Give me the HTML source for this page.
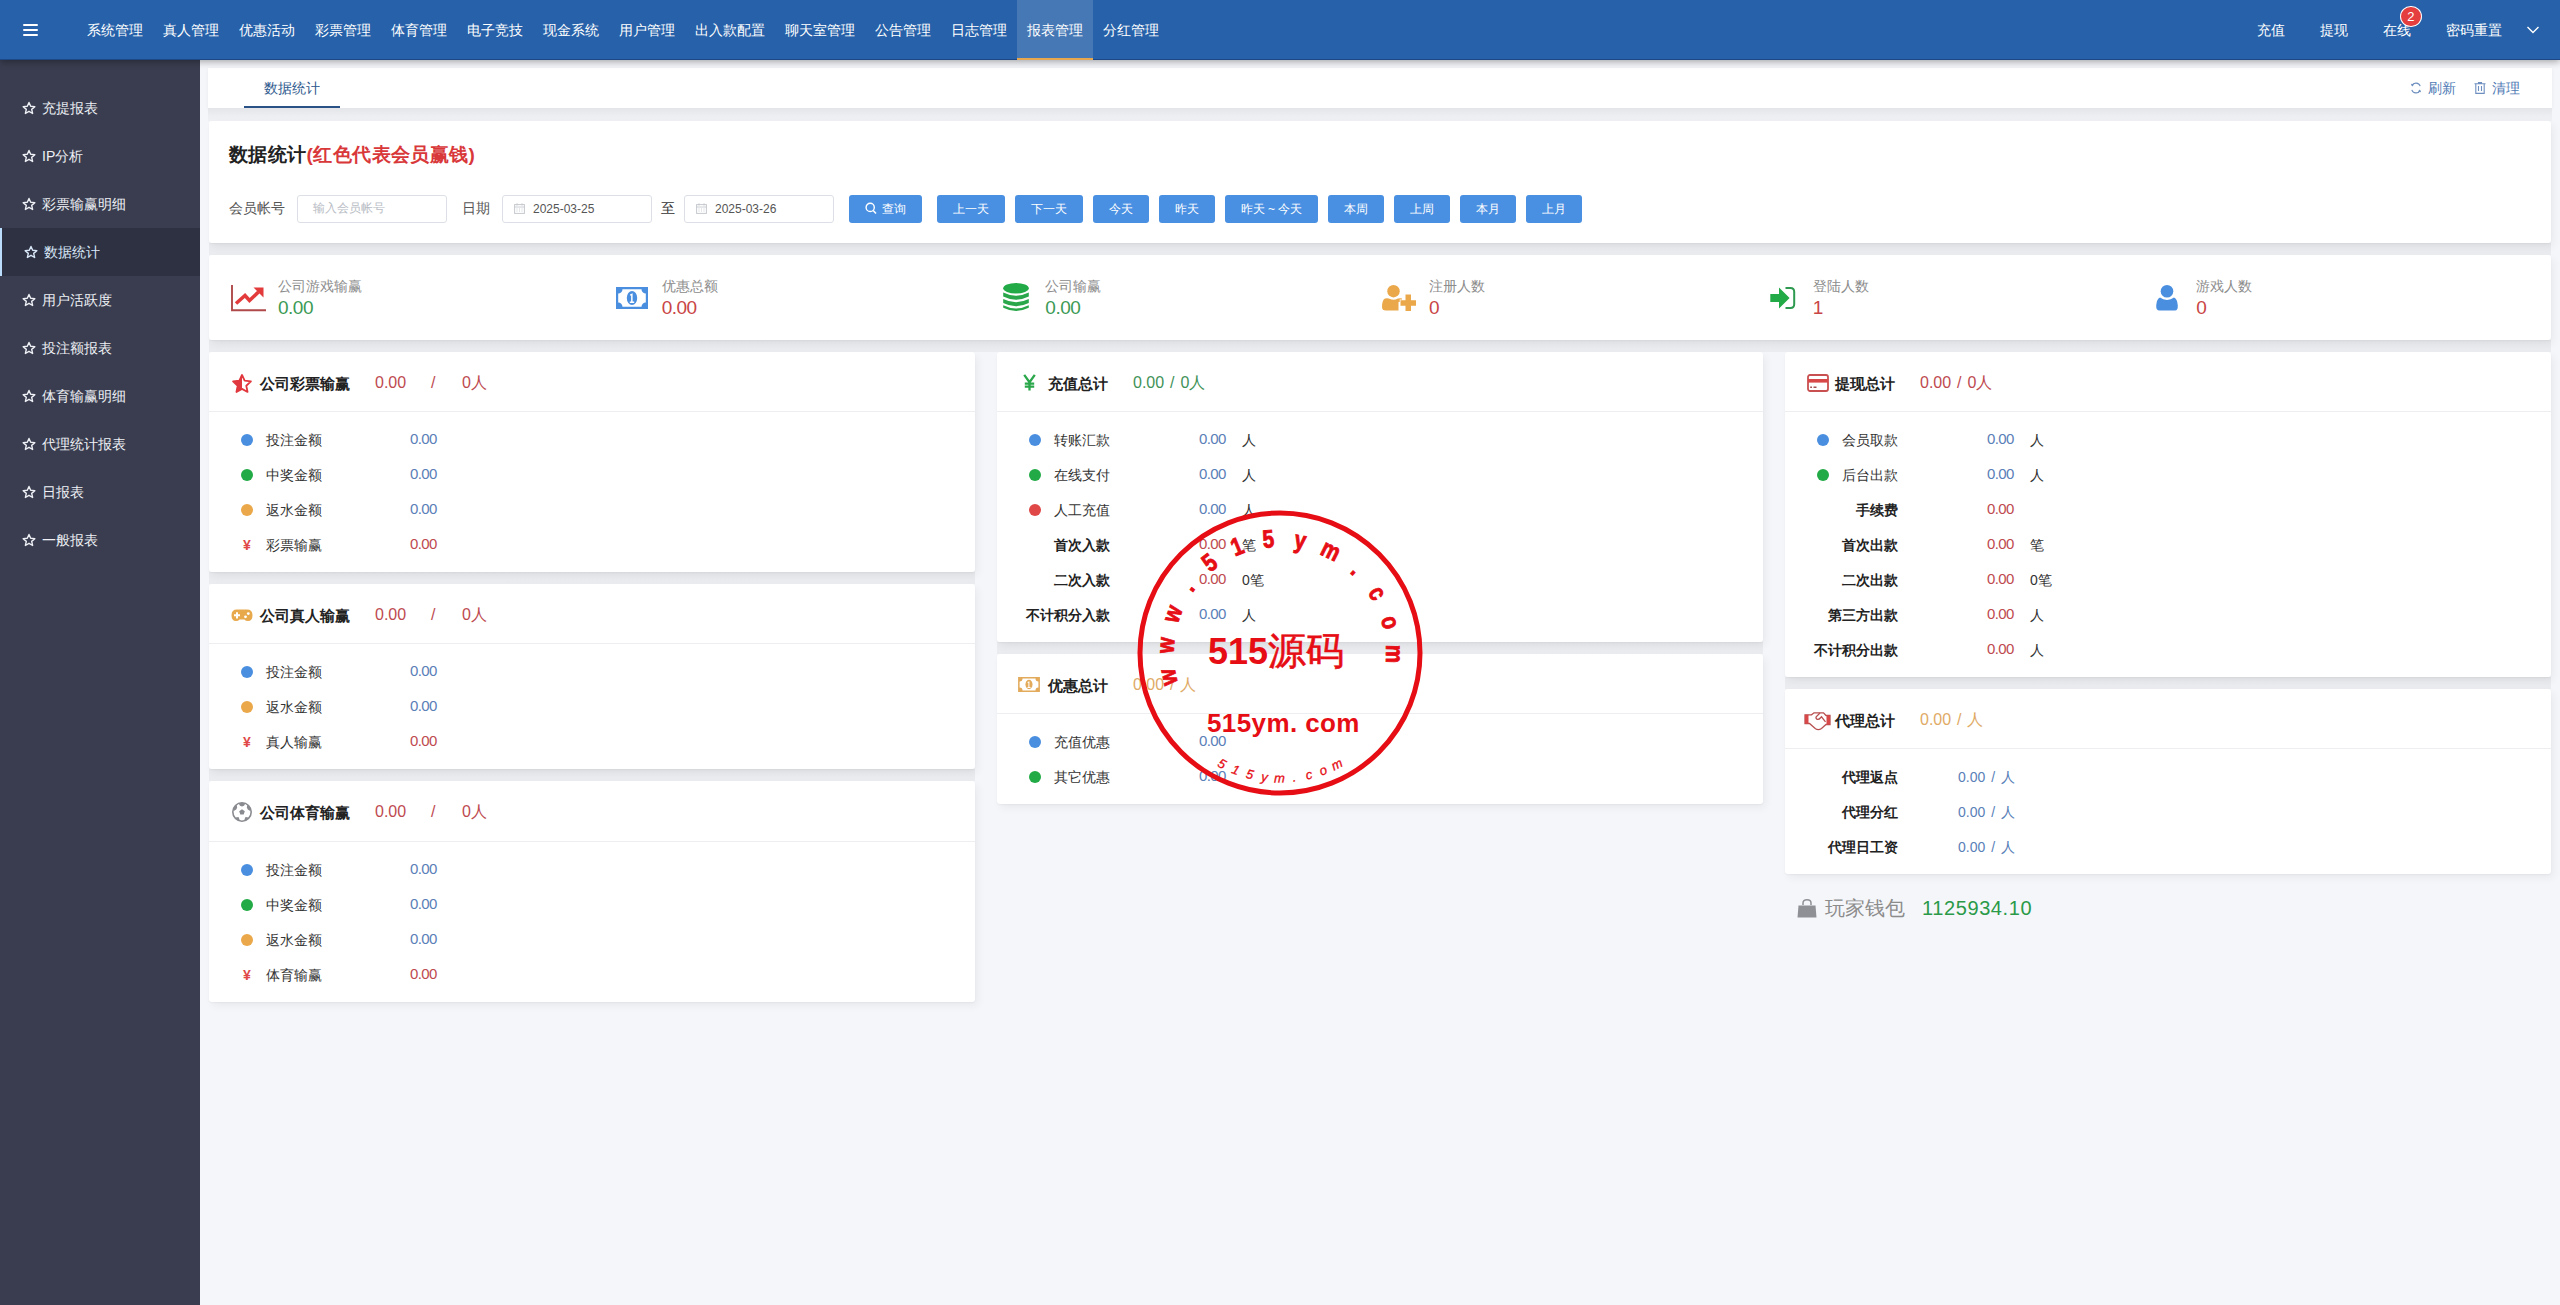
<!DOCTYPE html>
<html><head><meta charset="utf-8"><style>
*{box-sizing:border-box;margin:0;padding:0}
html,body{width:2560px;height:1305px;overflow:hidden}
body{font-family:"Liberation Sans",sans-serif;font-size:14px;color:#333;background:#f5f6fa;position:relative}
.t{position:absolute;white-space:nowrap}
.ic{position:absolute;overflow:visible}
#hdr{position:absolute;left:0;top:0;width:2560px;height:60px;background:#2661a9;box-shadow:0 2px 7px rgba(0,0,0,.32), inset 0 -1px 0 rgba(0,0,30,.25);z-index:5}
#hdr .nav{position:absolute;left:77px;top:0;height:60px;display:flex}
#hdr .nav div{height:60px;line-height:60px;padding:0 10px;color:#fff;white-space:nowrap}
#hdr .nav div.on{background:#4678b5;box-shadow:inset 0 -2px 0 #e8a74c}
.burger{position:absolute;left:23px;top:24px;width:15px;height:12px}
.burger i{display:block;height:2.4px;background:#fff;margin-bottom:2.4px;border-radius:1px}
.rnav div{position:absolute;top:0;line-height:60px;color:#fff;white-space:nowrap}
#side{position:absolute;left:0;top:60px;width:200px;height:1245px;background:#393d4f;z-index:4}
#side .it{position:absolute;left:0;width:200px;height:48px;line-height:48px;color:#eef0f5;padding-left:42px;white-space:nowrap}
#side .it.on{background:#2e3142;border-left:2px solid #bcdcfb;color:#d9e8f8}
#side .it svg{position:absolute;left:22px;top:17px}
#side .it.on svg{left:22px}
.card{position:absolute;background:#fff;border-radius:3px;box-shadow:3px 4px 8px rgba(0,0,0,.05),0 1px 2px rgba(0,0,0,.04)}
.gap{position:absolute;background:linear-gradient(#e8e9ed,#eaebef 35%,#ebecf0)}
.btn{position:absolute;top:195px;height:28px;line-height:28px;background:#4a90e2;color:#fff;border-radius:3px;text-align:center;font-size:12px;white-space:nowrap}
.inp{position:absolute;top:195px;height:28px;border:1px solid #dcdfe6;border-radius:3px;background:#fff}
.hline{position:absolute;height:1px;background:#eceef2}
.dot{position:absolute;width:12px;height:12px;border-radius:50%}
</style></head><body>
<div id="hdr">
<div class="burger"><i></i><i></i><i></i></div>
<div class="nav">
<div>系统管理</div>
<div>真人管理</div>
<div>优惠活动</div>
<div>彩票管理</div>
<div>体育管理</div>
<div>电子竞技</div>
<div>现金系统</div>
<div>用户管理</div>
<div>出入款配置</div>
<div>聊天室管理</div>
<div>公告管理</div>
<div>日志管理</div>
<div class="on">报表管理</div>
<div>分红管理</div>
</div>
<div class="rnav"><div style="left:2257px">充值</div><div style="left:2320px">提现</div><div style="left:2383px">在线</div><div style="left:2446px">密码重置</div></div>
<div style="position:absolute;left:2400px;top:5.5px;width:21.5px;height:21px;border-radius:50%;background:#e53e3e;border:1.3px solid #fff;color:#fff;font-size:13px;line-height:19px;text-align:center">2</div>
<svg class="ic" style="left:2526px;top:25px" width="14" height="10" viewBox="0 0 14 10"><path d="M1.5 2 L7 7.5 L12.5 2" fill="none" stroke="#fff" stroke-width="1.4"/></svg>
</div>
<div id="side">
<div class="it" style="top:24px"><svg width="14" height="14" viewBox="0 0 24 24"><path d="M12 2.5l2.9 6.6 7.1.6-5.4 4.7 1.6 7-6.2-3.7-6.2 3.7 1.6-7L2 9.7l7.1-.6z" fill="none" stroke="currentColor" stroke-width="2.4" stroke-linejoin="round"/></svg>充提报表</div>
<div class="it" style="top:72px"><svg width="14" height="14" viewBox="0 0 24 24"><path d="M12 2.5l2.9 6.6 7.1.6-5.4 4.7 1.6 7-6.2-3.7-6.2 3.7 1.6-7L2 9.7l7.1-.6z" fill="none" stroke="currentColor" stroke-width="2.4" stroke-linejoin="round"/></svg>IP分析</div>
<div class="it" style="top:120px"><svg width="14" height="14" viewBox="0 0 24 24"><path d="M12 2.5l2.9 6.6 7.1.6-5.4 4.7 1.6 7-6.2-3.7-6.2 3.7 1.6-7L2 9.7l7.1-.6z" fill="none" stroke="currentColor" stroke-width="2.4" stroke-linejoin="round"/></svg>彩票输赢明细</div>
<div class="it on" style="top:168px"><svg width="14" height="14" viewBox="0 0 24 24"><path d="M12 2.5l2.9 6.6 7.1.6-5.4 4.7 1.6 7-6.2-3.7-6.2 3.7 1.6-7L2 9.7l7.1-.6z" fill="none" stroke="currentColor" stroke-width="2.4" stroke-linejoin="round"/></svg>数据统计</div>
<div class="it" style="top:216px"><svg width="14" height="14" viewBox="0 0 24 24"><path d="M12 2.5l2.9 6.6 7.1.6-5.4 4.7 1.6 7-6.2-3.7-6.2 3.7 1.6-7L2 9.7l7.1-.6z" fill="none" stroke="currentColor" stroke-width="2.4" stroke-linejoin="round"/></svg>用户活跃度</div>
<div class="it" style="top:264px"><svg width="14" height="14" viewBox="0 0 24 24"><path d="M12 2.5l2.9 6.6 7.1.6-5.4 4.7 1.6 7-6.2-3.7-6.2 3.7 1.6-7L2 9.7l7.1-.6z" fill="none" stroke="currentColor" stroke-width="2.4" stroke-linejoin="round"/></svg>投注额报表</div>
<div class="it" style="top:312px"><svg width="14" height="14" viewBox="0 0 24 24"><path d="M12 2.5l2.9 6.6 7.1.6-5.4 4.7 1.6 7-6.2-3.7-6.2 3.7 1.6-7L2 9.7l7.1-.6z" fill="none" stroke="currentColor" stroke-width="2.4" stroke-linejoin="round"/></svg>体育输赢明细</div>
<div class="it" style="top:360px"><svg width="14" height="14" viewBox="0 0 24 24"><path d="M12 2.5l2.9 6.6 7.1.6-5.4 4.7 1.6 7-6.2-3.7-6.2 3.7 1.6-7L2 9.7l7.1-.6z" fill="none" stroke="currentColor" stroke-width="2.4" stroke-linejoin="round"/></svg>代理统计报表</div>
<div class="it" style="top:408px"><svg width="14" height="14" viewBox="0 0 24 24"><path d="M12 2.5l2.9 6.6 7.1.6-5.4 4.7 1.6 7-6.2-3.7-6.2 3.7 1.6-7L2 9.7l7.1-.6z" fill="none" stroke="currentColor" stroke-width="2.4" stroke-linejoin="round"/></svg>日报表</div>
<div class="it" style="top:456px"><svg width="14" height="14" viewBox="0 0 24 24"><path d="M12 2.5l2.9 6.6 7.1.6-5.4 4.7 1.6 7-6.2-3.7-6.2 3.7 1.6-7L2 9.7l7.1-.6z" fill="none" stroke="currentColor" stroke-width="2.4" stroke-linejoin="round"/></svg>一般报表</div>
</div>
<div class="card" style="left:208px;top:68px;width:2344px;height:40px;border-radius:0;box-shadow:0 1px 4px rgba(0,0,0,.05)"></div>
<div class="t" style="left:264px;top:78.0px;font-size:14px;line-height:20px;color:#2f5a8e;font-weight:normal;">数据统计</div>
<div style="position:absolute;left:244px;top:106px;width:96px;height:2px;background:#2a5286"></div>
<svg class="ic" style="left:2410px;top:82px" width="12" height="12" viewBox="0 0 12 12"><path d="M10.2 4.2A4.5 4.5 0 0 0 1.9 3.6" fill="none" stroke="#6d8fbf" stroke-width="1.1"/><path d="M1.8 7.8A4.5 4.5 0 0 0 10.1 8.4" fill="none" stroke="#6d8fbf" stroke-width="1.1"/><path d="M0.8 1.8L2.2 4.4 4.2 2.6z" fill="#6d8fbf"/><path d="M11.2 10.2L9.8 7.6 7.8 9.4z" fill="#6d8fbf"/></svg>
<div class="t" style="left:2428px;top:78.0px;font-size:14px;line-height:20px;color:#4f7bb5;font-weight:normal;">刷新</div>
<svg class="ic" style="left:2474px;top:82px" width="12" height="12" viewBox="0 0 12 12"><path d="M0.5 1.8H11.5M4.5 1.8V0.6H7.5V1.8M1.8 1.8V11.4H10.2V1.8M4.5 4V9M7.5 4V9" fill="none" stroke="#6d8fbf" stroke-width="1.1"/></svg>
<div class="t" style="left:2492px;top:78.0px;font-size:14px;line-height:20px;color:#4f7bb5;font-weight:normal;">清理</div>
<div class="gap" style="left:208px;top:108px;width:2344px;height:13px;background:linear-gradient(#e4e5e9,#eceef1 60%,#eef0f3)"></div>
<div class="gap" style="left:209px;top:243px;width:2342px;height:12px"></div>
<div class="gap" style="left:209px;top:340px;width:2342px;height:12px"></div>
<div class="gap" style="left:209px;top:572px;width:766px;height:12px"></div>
<div class="gap" style="left:209px;top:769px;width:766px;height:12px"></div>
<div class="gap" style="left:997px;top:642px;width:766px;height:12px"></div>
<div class="gap" style="left:1785px;top:677px;width:766px;height:12px"></div>
<div class="card" style="left:209px;top:121px;width:2342px;height:122px"></div>
<div class="t" style="left:229px;top:143.0px;font-size:19px;line-height:24px;color:#222;font-weight:bold;letter-spacing:0.4px">数据统计<span style="color:#d9383a">(红色代表会员赢钱)</span></div>
<div class="t" style="left:229px;top:198.0px;font-size:14px;line-height:20px;color:#555;font-weight:normal;">会员帐号</div>
<div class="inp" style="left:297px;width:150px"></div>
<div class="t" style="left:313px;top:199.0px;font-size:12px;line-height:18px;color:#b8bcc4;font-weight:normal;">输入会员帐号</div>
<div class="t" style="left:462px;top:198.0px;font-size:14px;line-height:20px;color:#555;font-weight:normal;">日期</div>
<div class="inp" style="left:502px;width:150px"></div>
<div class="ic" style="left:514px;top:201px"><svg width="11" height="11" viewBox="0 0 11 11"><rect x="0.6" y="1.6" width="9.8" height="8.8" fill="none" stroke="#c5c8ce" stroke-width="1"/><path d="M0.6 4H10.4M3 0.3V2.6M8 0.3V2.6M2.5 6H3.5M5 6H6M7.5 6H8.5M2.5 8H3.5M5 8H6M7.5 8H8.5" stroke="#c5c8ce" stroke-width="0.9"/></svg></div>
<div class="t" style="left:533px;top:200.0px;font-size:12px;line-height:18px;color:#555;font-weight:normal;">2025-03-25</div>
<div class="t" style="left:661px;top:198.0px;font-size:14px;line-height:20px;color:#333;font-weight:normal;">至</div>
<div class="inp" style="left:684px;width:150px"></div>
<div class="ic" style="left:696px;top:201px"><svg width="11" height="11" viewBox="0 0 11 11"><rect x="0.6" y="1.6" width="9.8" height="8.8" fill="none" stroke="#c5c8ce" stroke-width="1"/><path d="M0.6 4H10.4M3 0.3V2.6M8 0.3V2.6M2.5 6H3.5M5 6H6M7.5 6H8.5M2.5 8H3.5M5 8H6M7.5 8H8.5" stroke="#c5c8ce" stroke-width="0.9"/></svg></div>
<div class="t" style="left:715px;top:200.0px;font-size:12px;line-height:18px;color:#555;font-weight:normal;">2025-03-26</div>
<div class="btn" style="left:849px;width:73px"><span style="display:inline-block;width:16px"></span>查询</div>
<div class="btn" style="left:937px;width:68px">上一天</div>
<div class="btn" style="left:1015px;width:68px">下一天</div>
<div class="btn" style="left:1093px;width:56px">今天</div>
<div class="btn" style="left:1159px;width:56px">昨天</div>
<div class="btn" style="left:1225px;width:93px">昨天 ~ 今天</div>
<div class="btn" style="left:1328px;width:56px">本周</div>
<div class="btn" style="left:1394px;width:56px">上周</div>
<div class="btn" style="left:1460px;width:56px">本月</div>
<div class="btn" style="left:1526px;width:56px">上月</div>
<svg class="ic" style="left:865px;top:202px" width="12" height="13" viewBox="0 0 12 13"><circle cx="5.2" cy="5.4" r="4.1" fill="none" stroke="#fff" stroke-width="1.4"/><path d="M8.2 8.5L11 11.5" stroke="#fff" stroke-width="1.6"/></svg>
<div class="card" style="left:209px;top:255px;width:2342px;height:85px"></div>
<div class="t" style="left:278.0px;top:276.5px;font-size:14px;line-height:18px;color:#8c8c8c;font-weight:normal;">公司游戏输赢</div>
<div class="t" style="left:278.0px;top:297.0px;font-size:19px;line-height:22px;color:#3b9a55;font-weight:normal;letter-spacing:-0.5px">0.00</div>
<div class="t" style="left:661.6700000000001px;top:276.5px;font-size:14px;line-height:18px;color:#8c8c8c;font-weight:normal;">优惠总额</div>
<div class="t" style="left:661.6700000000001px;top:297.0px;font-size:19px;line-height:22px;color:#c94545;font-weight:normal;letter-spacing:-0.5px">0.00</div>
<div class="t" style="left:1045.3400000000001px;top:276.5px;font-size:14px;line-height:18px;color:#8c8c8c;font-weight:normal;">公司输赢</div>
<div class="t" style="left:1045.3400000000001px;top:297.0px;font-size:19px;line-height:22px;color:#3b9a55;font-weight:normal;letter-spacing:-0.5px">0.00</div>
<div class="t" style="left:1429.01px;top:276.5px;font-size:14px;line-height:18px;color:#8c8c8c;font-weight:normal;">注册人数</div>
<div class="t" style="left:1429.01px;top:297.0px;font-size:19px;line-height:22px;color:#c94545;font-weight:normal;letter-spacing:-0.5px">0</div>
<div class="t" style="left:1812.68px;top:276.5px;font-size:14px;line-height:18px;color:#8c8c8c;font-weight:normal;">登陆人数</div>
<div class="t" style="left:1812.68px;top:297.0px;font-size:19px;line-height:22px;color:#c94545;font-weight:normal;letter-spacing:-0.5px">1</div>
<div class="t" style="left:2196.3500000000004px;top:276.5px;font-size:14px;line-height:18px;color:#8c8c8c;font-weight:normal;">游戏人数</div>
<div class="t" style="left:2196.3500000000004px;top:297.0px;font-size:19px;line-height:22px;color:#c94545;font-weight:normal;letter-spacing:-0.5px">0</div>
<svg class="ic" style="left:231px;top:284px" width="36" height="28" viewBox="0 0 36 28"><path d="M1 1V26.2H35" fill="none" stroke="#b04a4a" stroke-width="1.9"/><path d="M5 19.5L14 11.5 18.5 16.5 27.5 8" fill="none" stroke="#e33b3b" stroke-width="3.6"/><path d="M22.5 3.5H32.5V13.5z" fill="#e33b3b"/></svg>
<svg class="ic" style="left:616px;top:287px" width="32" height="22" viewBox="0 0 32 22"><path d="M0 0H32V22H0z M6.5 2.2A4.3 4.3 0 0 1 2.2 6.5V15.5A4.3 4.3 0 0 1 6.5 19.8H25.5A4.3 4.3 0 0 1 29.8 15.5V6.5A4.3 4.3 0 0 1 25.5 2.2z" fill="#4a8ee0" fill-rule="evenodd"/><ellipse cx="16" cy="11" rx="5.2" ry="7" fill="#4a8ee0"/><path d="M14 7.5L16.6 6.2V14.5H18.2V16H13.8V14.5H15.1V8.3L14 8.8z" fill="#fff"/></svg>
<svg class="ic" style="left:1003px;top:283px" width="26" height="30" viewBox="0 0 26 30"><ellipse cx="13" cy="5.2" rx="12.8" ry="5.2" fill="#22aa46"/><path d="M0.2 9.6Q13 16 25.8 9.6V13.6Q13 20 0.2 13.6z M0.2 16Q13 22.4 25.8 16V20Q13 26.4 0.2 20z M0.2 22.3Q13 28.7 25.8 22.3V24.8Q13 31.2 0.2 24.8z" fill="#2aa74a"/></svg>
<svg class="ic" style="left:1382px;top:285px" width="34" height="26" viewBox="0 0 34 26"><circle cx="11.5" cy="6.2" r="6.2" fill="#eaa84a"/><path d="M3 13.5Q6 12.8 7.5 13.8 11.5 16 16 13.6 18 13 20 13.5V17H16.5V25.5H4Q0 25.5 0 22 0 15 3 13.5z" fill="#eaa84a"/><path d="M23.5 9.5H29V15.3H34V20.8H29V26H23.5V20.8H18.5V15.3H23.5z" fill="#eaa84a" stroke="#fff" stroke-width="1.6" paint-order="stroke"/></svg>
<svg class="ic" style="left:1770px;top:287px" width="26" height="22" viewBox="0 0 26 22"><path d="M0.3 7H9V0.4L19.6 11 9 21.6V15H0.3z" fill="#22aa46"/><path d="M15.5 1H20.5Q24.2 1 24.2 4.7V17.3Q24.2 21 20.5 21H15.5" fill="none" stroke="#2e9a50" stroke-width="2"/></svg>
<svg class="ic" style="left:2156px;top:285px" width="22" height="26" viewBox="0 0 22 26"><circle cx="11" cy="6.3" r="6.3" fill="#4a8ee0"/><path d="M4 12.6Q7 15 11 15 15 15 18 12.6 21.4 14 21.8 20.5 22 25.5 19 25.5H3.4Q0 25.5 0.2 20.5 0.6 14 4 12.6z" fill="#4a8ee0"/></svg>
<div class="card" style="left:209px;top:352px;width:766px;height:220px"></div>
<div class="hline" style="left:209px;top:411px;width:766px"></div>
<svg class="ic" style="left:232px;top:374px" width="20" height="19" viewBox="0 0 24 23"><path d="M12 1.2l3.2 6.9 7.6.9-5.6 5.2 1.5 7.5L12 18l-6.7 3.7 1.5-7.5L1.2 9l7.6-.9z" fill="none" stroke="#e0383e" stroke-width="2.2" stroke-linejoin="round"/><path d="M12 1.2V18l-6.7 3.7 1.5-7.5L1.2 9l7.6-.9z" fill="#e0383e"/></svg>
<div class="t" style="left:260px;top:372.5px;font-size:15px;line-height:21px;color:#222;font-weight:bold;">公司彩票输赢</div>
<div class="t" style="left:375px;top:372.0px;font-size:16px;line-height:22px;color:#be4a4f;font-weight:normal;">0.00</div>
<div class="t" style="left:431px;top:372.0px;font-size:16px;line-height:22px;color:#be4a4f;font-weight:normal;">/</div>
<div class="t" style="left:462px;top:372.0px;font-size:16px;line-height:22px;color:#be4a4f;font-weight:normal;">0人</div>
<div class="dot" style="left:241px;top:434px;background:#4a8ee0"></div>
<div class="t" style="left:266px;top:430.0px;font-size:14px;line-height:20px;color:#333;font-weight:normal;">投注金额</div>
<div class="t" style="left:410px;top:428.0px;font-size:15px;line-height:21px;color:#5a80b8;font-weight:normal;letter-spacing:-0.6px">0.00</div>
<div class="dot" style="left:241px;top:469px;background:#22aa46"></div>
<div class="t" style="left:266px;top:465.0px;font-size:14px;line-height:20px;color:#333;font-weight:normal;">中奖金额</div>
<div class="t" style="left:410px;top:463.0px;font-size:15px;line-height:21px;color:#5a80b8;font-weight:normal;letter-spacing:-0.6px">0.00</div>
<div class="dot" style="left:241px;top:504px;background:#eaa84a"></div>
<div class="t" style="left:266px;top:500.0px;font-size:14px;line-height:20px;color:#333;font-weight:normal;">返水金额</div>
<div class="t" style="left:410px;top:498.0px;font-size:15px;line-height:21px;color:#5a80b8;font-weight:normal;letter-spacing:-0.6px">0.00</div>
<div class="t" style="left:243px;top:535.0px;font-size:14px;line-height:20px;color:#e04848;font-weight:bold;">¥</div>
<div class="t" style="left:266px;top:535.0px;font-size:14px;line-height:20px;color:#333;font-weight:normal;">彩票输赢</div>
<div class="t" style="left:410px;top:533.0px;font-size:15px;line-height:21px;color:#be4a4f;font-weight:normal;letter-spacing:-0.6px">0.00</div>
<div class="card" style="left:209px;top:584px;width:766px;height:185px"></div>
<div class="hline" style="left:209px;top:643px;width:766px"></div>
<svg class="ic" style="left:231px;top:609px" width="22" height="13" viewBox="0 0 22 13"><path d="M6 0.5H16Q21.5 0.5 21.5 6.2 21.5 12 17 12 14.5 12 13.5 10.5H8.5Q7.5 12 5 12 0.5 12 0.5 6.2 0.5 0.5 6 0.5z" fill="#e8a94c"/><path d="M5 3.2H7V5.3H9V7.3H7V9.4H5V7.3H3V5.3H5z" fill="#fff"/><circle cx="14.5" cy="7.8" r="1.4" fill="#fff"/><circle cx="17.3" cy="4.6" r="1.4" fill="#fff"/></svg>
<div class="t" style="left:260px;top:604.5px;font-size:15px;line-height:21px;color:#222;font-weight:bold;">公司真人输赢</div>
<div class="t" style="left:375px;top:604.0px;font-size:16px;line-height:22px;color:#be4a4f;font-weight:normal;">0.00</div>
<div class="t" style="left:431px;top:604.0px;font-size:16px;line-height:22px;color:#be4a4f;font-weight:normal;">/</div>
<div class="t" style="left:462px;top:604.0px;font-size:16px;line-height:22px;color:#be4a4f;font-weight:normal;">0人</div>
<div class="dot" style="left:241px;top:666px;background:#4a8ee0"></div>
<div class="t" style="left:266px;top:662.0px;font-size:14px;line-height:20px;color:#333;font-weight:normal;">投注金额</div>
<div class="t" style="left:410px;top:660.0px;font-size:15px;line-height:21px;color:#5a80b8;font-weight:normal;letter-spacing:-0.6px">0.00</div>
<div class="dot" style="left:241px;top:701px;background:#eaa84a"></div>
<div class="t" style="left:266px;top:697.0px;font-size:14px;line-height:20px;color:#333;font-weight:normal;">返水金额</div>
<div class="t" style="left:410px;top:695.0px;font-size:15px;line-height:21px;color:#5a80b8;font-weight:normal;letter-spacing:-0.6px">0.00</div>
<div class="t" style="left:243px;top:732.0px;font-size:14px;line-height:20px;color:#e04848;font-weight:bold;">¥</div>
<div class="t" style="left:266px;top:732.0px;font-size:14px;line-height:20px;color:#333;font-weight:normal;">真人输赢</div>
<div class="t" style="left:410px;top:730.0px;font-size:15px;line-height:21px;color:#be4a4f;font-weight:normal;letter-spacing:-0.6px">0.00</div>
<div class="card" style="left:209px;top:781px;width:766px;height:221px"></div>
<div class="hline" style="left:209px;top:841px;width:766px"></div>
<svg class="ic" style="left:232px;top:802px" width="20" height="20" viewBox="0 0 20 20"><circle cx="10" cy="10" r="9.2" fill="none" stroke="#8a8b90" stroke-width="1.6"/><path d="M10 7.2L12.8 9.2 11.7 12.5H8.3L7.2 9.2z" fill="#8a8b90"/><path d="M6.5 1.3Q10 0 13.5 1.3L12 3.8 10 4.6 8 3.8z M1 8Q1.8 4.5 4.6 2.6L5.2 5.6 4.2 7.5 1.8 9z M19 8Q18.2 4.5 15.4 2.6L14.8 5.6 15.8 7.5 18.2 9z M3.3 15.5L6.5 15 7.6 17.5 6.8 19Q4.5 18 3.3 15.5z M16.7 15.5L13.5 15 12.4 17.5 13.2 19Q15.5 18 16.7 15.5z" fill="#8a8b90"/></svg>
<div class="t" style="left:260px;top:801.5px;font-size:15px;line-height:21px;color:#222;font-weight:bold;">公司体育输赢</div>
<div class="t" style="left:375px;top:801.0px;font-size:16px;line-height:22px;color:#be4a4f;font-weight:normal;">0.00</div>
<div class="t" style="left:431px;top:801.0px;font-size:16px;line-height:22px;color:#be4a4f;font-weight:normal;">/</div>
<div class="t" style="left:462px;top:801.0px;font-size:16px;line-height:22px;color:#be4a4f;font-weight:normal;">0人</div>
<div class="dot" style="left:241px;top:864px;background:#4a8ee0"></div>
<div class="t" style="left:266px;top:860.0px;font-size:14px;line-height:20px;color:#333;font-weight:normal;">投注金额</div>
<div class="t" style="left:410px;top:858.0px;font-size:15px;line-height:21px;color:#5a80b8;font-weight:normal;letter-spacing:-0.6px">0.00</div>
<div class="dot" style="left:241px;top:899px;background:#22aa46"></div>
<div class="t" style="left:266px;top:895.0px;font-size:14px;line-height:20px;color:#333;font-weight:normal;">中奖金额</div>
<div class="t" style="left:410px;top:893.0px;font-size:15px;line-height:21px;color:#5a80b8;font-weight:normal;letter-spacing:-0.6px">0.00</div>
<div class="dot" style="left:241px;top:934px;background:#eaa84a"></div>
<div class="t" style="left:266px;top:930.0px;font-size:14px;line-height:20px;color:#333;font-weight:normal;">返水金额</div>
<div class="t" style="left:410px;top:928.0px;font-size:15px;line-height:21px;color:#5a80b8;font-weight:normal;letter-spacing:-0.6px">0.00</div>
<div class="t" style="left:243px;top:965.0px;font-size:14px;line-height:20px;color:#e04848;font-weight:bold;">¥</div>
<div class="t" style="left:266px;top:965.0px;font-size:14px;line-height:20px;color:#333;font-weight:normal;">体育输赢</div>
<div class="t" style="left:410px;top:963.0px;font-size:15px;line-height:21px;color:#be4a4f;font-weight:normal;letter-spacing:-0.6px">0.00</div>
<div class="card" style="left:997px;top:352px;width:766px;height:290px"></div>
<div class="hline" style="left:997px;top:411px;width:766px"></div>
<svg class="ic" style="left:1023px;top:374px" width="13" height="17" viewBox="0 0 13 17"><path d="M1.2 0.8L6.5 8.2 11.8 0.8M6.5 8.2V16.4M1.8 9.6H11.2M1.8 12.6H11.2" fill="none" stroke="#2aa74a" stroke-width="2.3"/></svg>
<div class="t" style="left:1048px;top:372.5px;font-size:15px;line-height:21px;color:#222;font-weight:bold;">充值总计</div>
<div class="t" style="left:1133px;top:372.0px;font-size:16px;line-height:22px;color:#3f9258;font-weight:normal;word-spacing:1.5px">0.00 / 0人</div>
<div class="dot" style="left:1029px;top:434px;background:#4a8ee0"></div>
<div class="t" style="right:1450px;top:430.0px;font-size:14px;line-height:20px;color:#333;font-weight:normal;text-align:right;">转账汇款</div>
<div class="t" style="left:1199px;top:428.0px;font-size:15px;line-height:21px;color:#5a80b8;font-weight:normal;letter-spacing:-0.6px">0.00</div>
<div class="t" style="left:1242px;top:430.0px;font-size:14px;line-height:20px;color:#333;font-weight:normal;">人</div>
<div class="dot" style="left:1029px;top:469px;background:#22aa46"></div>
<div class="t" style="right:1450px;top:465.0px;font-size:14px;line-height:20px;color:#333;font-weight:normal;text-align:right;">在线支付</div>
<div class="t" style="left:1199px;top:463.0px;font-size:15px;line-height:21px;color:#5a80b8;font-weight:normal;letter-spacing:-0.6px">0.00</div>
<div class="t" style="left:1242px;top:465.0px;font-size:14px;line-height:20px;color:#333;font-weight:normal;">人</div>
<div class="dot" style="left:1029px;top:504px;background:#e04848"></div>
<div class="t" style="right:1450px;top:500.0px;font-size:14px;line-height:20px;color:#333;font-weight:normal;text-align:right;">人工充值</div>
<div class="t" style="left:1199px;top:498.0px;font-size:15px;line-height:21px;color:#5a80b8;font-weight:normal;letter-spacing:-0.6px">0.00</div>
<div class="t" style="left:1242px;top:500.0px;font-size:14px;line-height:20px;color:#333;font-weight:normal;">人</div>
<div class="t" style="right:1450px;top:535.0px;font-size:14px;line-height:20px;color:#222;font-weight:bold;text-align:right;">首次入款</div>
<div class="t" style="left:1199px;top:533.0px;font-size:15px;line-height:21px;color:#be4a4f;font-weight:normal;letter-spacing:-0.6px">0.00</div>
<div class="t" style="left:1242px;top:535.0px;font-size:14px;line-height:20px;color:#333;font-weight:normal;">笔</div>
<div class="t" style="right:1450px;top:570.0px;font-size:14px;line-height:20px;color:#222;font-weight:bold;text-align:right;">二次入款</div>
<div class="t" style="left:1199px;top:568.0px;font-size:15px;line-height:21px;color:#be4a4f;font-weight:normal;letter-spacing:-0.6px">0.00</div>
<div class="t" style="left:1242px;top:570.0px;font-size:14px;line-height:20px;color:#333;font-weight:normal;">0笔</div>
<div class="t" style="right:1450px;top:605.0px;font-size:14px;line-height:20px;color:#222;font-weight:bold;text-align:right;">不计积分入款</div>
<div class="t" style="left:1199px;top:603.0px;font-size:15px;line-height:21px;color:#5a80b8;font-weight:normal;letter-spacing:-0.6px">0.00</div>
<div class="t" style="left:1242px;top:605.0px;font-size:14px;line-height:20px;color:#333;font-weight:normal;">人</div>
<div class="card" style="left:997px;top:654px;width:766px;height:150px"></div>
<div class="hline" style="left:997px;top:713px;width:766px"></div>
<svg class="ic" style="left:1018px;top:677px" width="22" height="15" viewBox="0 0 32 22"><path d="M0 0H32V22H0z M6.5 2.2A4.3 4.3 0 0 1 2.2 6.5V15.5A4.3 4.3 0 0 1 6.5 19.8H25.5A4.3 4.3 0 0 1 29.8 15.5V6.5A4.3 4.3 0 0 1 25.5 2.2z" fill="#e2aa5a" fill-rule="evenodd"/><ellipse cx="16" cy="11" rx="5.2" ry="7" fill="#e2aa5a"/><path d="M14 7.5L16.6 6.2V14.5H18.2V16H13.8V14.5H15.1V8.3L14 8.8z" fill="#fff"/></svg>
<div class="t" style="left:1048px;top:674.5px;font-size:15px;line-height:21px;color:#222;font-weight:bold;">优惠总计</div>
<div class="t" style="left:1133px;top:674.0px;font-size:16px;line-height:22px;color:#e0aa66;font-weight:normal;word-spacing:1.5px">0.00 / 人</div>
<div class="dot" style="left:1029px;top:736px;background:#4a8ee0"></div>
<div class="t" style="right:1450px;top:732.0px;font-size:14px;line-height:20px;color:#333;font-weight:normal;text-align:right;">充值优惠</div>
<div class="t" style="left:1199px;top:730.0px;font-size:15px;line-height:21px;color:#5a80b8;font-weight:normal;letter-spacing:-0.6px">0.00</div>
<div class="dot" style="left:1029px;top:771px;background:#22aa46"></div>
<div class="t" style="right:1450px;top:767.0px;font-size:14px;line-height:20px;color:#333;font-weight:normal;text-align:right;">其它优惠</div>
<div class="t" style="left:1199px;top:765.0px;font-size:15px;line-height:21px;color:#5a80b8;font-weight:normal;letter-spacing:-0.6px">0.00</div>
<div class="card" style="left:1785px;top:352px;width:766px;height:325px"></div>
<div class="hline" style="left:1785px;top:411px;width:766px"></div>
<svg class="ic" style="left:1807px;top:374px" width="22" height="18" viewBox="0 0 22 18"><rect x="1" y="1" width="20" height="16" rx="2" fill="none" stroke="#c85050" stroke-width="1.8"/><rect x="1" y="5" width="20" height="3.6" fill="#d94848"/><path d="M3.2 13.2H5M6.5 13.2H9.5" stroke="#a05050" stroke-width="1.4"/></svg>
<div class="t" style="left:1835px;top:372.5px;font-size:15px;line-height:21px;color:#222;font-weight:bold;">提现总计</div>
<div class="t" style="left:1920px;top:372.0px;font-size:16px;line-height:22px;color:#be4a4f;font-weight:normal;word-spacing:1.5px">0.00 / 0人</div>
<div class="dot" style="left:1817px;top:434px;background:#4a8ee0"></div>
<div class="t" style="right:662px;top:430.0px;font-size:14px;line-height:20px;color:#333;font-weight:normal;text-align:right;">会员取款</div>
<div class="t" style="left:1987px;top:428.0px;font-size:15px;line-height:21px;color:#5a80b8;font-weight:normal;letter-spacing:-0.6px">0.00</div>
<div class="t" style="left:2030px;top:430.0px;font-size:14px;line-height:20px;color:#333;font-weight:normal;">人</div>
<div class="dot" style="left:1817px;top:469px;background:#22aa46"></div>
<div class="t" style="right:662px;top:465.0px;font-size:14px;line-height:20px;color:#333;font-weight:normal;text-align:right;">后台出款</div>
<div class="t" style="left:1987px;top:463.0px;font-size:15px;line-height:21px;color:#5a80b8;font-weight:normal;letter-spacing:-0.6px">0.00</div>
<div class="t" style="left:2030px;top:465.0px;font-size:14px;line-height:20px;color:#333;font-weight:normal;">人</div>
<div class="t" style="right:662px;top:500.0px;font-size:14px;line-height:20px;color:#222;font-weight:bold;text-align:right;">手续费</div>
<div class="t" style="left:1987px;top:498.0px;font-size:15px;line-height:21px;color:#be4a4f;font-weight:normal;letter-spacing:-0.6px">0.00</div>
<div class="t" style="right:662px;top:535.0px;font-size:14px;line-height:20px;color:#222;font-weight:bold;text-align:right;">首次出款</div>
<div class="t" style="left:1987px;top:533.0px;font-size:15px;line-height:21px;color:#be4a4f;font-weight:normal;letter-spacing:-0.6px">0.00</div>
<div class="t" style="left:2030px;top:535.0px;font-size:14px;line-height:20px;color:#333;font-weight:normal;">笔</div>
<div class="t" style="right:662px;top:570.0px;font-size:14px;line-height:20px;color:#222;font-weight:bold;text-align:right;">二次出款</div>
<div class="t" style="left:1987px;top:568.0px;font-size:15px;line-height:21px;color:#be4a4f;font-weight:normal;letter-spacing:-0.6px">0.00</div>
<div class="t" style="left:2030px;top:570.0px;font-size:14px;line-height:20px;color:#333;font-weight:normal;">0笔</div>
<div class="t" style="right:662px;top:605.0px;font-size:14px;line-height:20px;color:#222;font-weight:bold;text-align:right;">第三方出款</div>
<div class="t" style="left:1987px;top:603.0px;font-size:15px;line-height:21px;color:#be4a4f;font-weight:normal;letter-spacing:-0.6px">0.00</div>
<div class="t" style="left:2030px;top:605.0px;font-size:14px;line-height:20px;color:#333;font-weight:normal;">人</div>
<div class="t" style="right:662px;top:640.0px;font-size:14px;line-height:20px;color:#222;font-weight:bold;text-align:right;">不计积分出款</div>
<div class="t" style="left:1987px;top:638.0px;font-size:15px;line-height:21px;color:#be4a4f;font-weight:normal;letter-spacing:-0.6px">0.00</div>
<div class="t" style="left:2030px;top:640.0px;font-size:14px;line-height:20px;color:#333;font-weight:normal;">人</div>
<div class="card" style="left:1785px;top:689px;width:766px;height:185px"></div>
<div class="hline" style="left:1785px;top:748px;width:766px"></div>
<svg class="ic" style="left:1804px;top:712px" width="27" height="18" viewBox="0 0 27 18"><path d="M1 2.8H7.5L10 0.8H19.5L22 3.5H26V12.5H22L17.5 16.5Q14.5 18.5 11.5 16.8L5.5 11.5H1z" fill="none" stroke="#b85050" stroke-width="1.3"/><path d="M1 2.8H4.5V11.5H1z M22.5 3.5H26V12.5H22.5z" fill="#d94848"/><path d="M16 1L12.2 4.8Q11.5 6.5 13.2 7.3 15 7.8 16.3 6L17.5 4.8 21.5 9.8" fill="none" stroke="#b85050" stroke-width="1.3"/></svg>
<div class="t" style="left:1835px;top:709.5px;font-size:15px;line-height:21px;color:#222;font-weight:bold;">代理总计</div>
<div class="t" style="left:1920px;top:709.0px;font-size:16px;line-height:22px;color:#e0aa66;font-weight:normal;word-spacing:1.5px">0.00 / 人</div>
<div class="t" style="right:662px;top:767.0px;font-size:14px;line-height:20px;color:#222;font-weight:bold;text-align:right;">代理返点</div>
<div class="t" style="left:1958px;top:767.0px;font-size:14px;line-height:20px;color:#5a80b8;font-weight:normal;word-spacing:2px">0.00 / 人</div>
<div class="t" style="right:662px;top:802.0px;font-size:14px;line-height:20px;color:#222;font-weight:bold;text-align:right;">代理分红</div>
<div class="t" style="left:1958px;top:802.0px;font-size:14px;line-height:20px;color:#5a80b8;font-weight:normal;word-spacing:2px">0.00 / 人</div>
<div class="t" style="right:662px;top:837.0px;font-size:14px;line-height:20px;color:#222;font-weight:bold;text-align:right;">代理日工资</div>
<div class="t" style="left:1958px;top:837.0px;font-size:14px;line-height:20px;color:#5a80b8;font-weight:normal;word-spacing:2px">0.00 / 人</div>
<svg class="ic" style="left:1797px;top:899px" width="20" height="19" viewBox="0 0 20 19"><path d="M6 6V4Q6 0.8 10 0.8 14 0.8 14 4V6" fill="none" stroke="#8e9096" stroke-width="1.5"/><path d="M1.5 6.5H18.5L19.5 18.5H0.5z" fill="#8e9096"/></svg>
<div class="t" style="left:1825px;top:895.0px;font-size:20px;line-height:26px;color:#8c8c8c;font-weight:normal;">玩家钱包</div>
<div class="t" style="left:1922px;top:895.0px;font-size:20px;line-height:26px;color:#2a9a48;font-weight:normal;letter-spacing:0.6px">1125934.10</div>
<svg style="position:absolute;left:1130px;top:503px;z-index:10" width="300" height="300" viewBox="-150 -150 300 300">
<circle cx="0" cy="0" r="140" fill="none" stroke="#e60d14" stroke-width="5"/>
<text transform="rotate(257.80) translate(0,-115) scale(0.82,1)" text-anchor="middle" dominant-baseline="central" font-family="Liberation Sans" font-weight="bold" font-size="25" fill="#e60d14" stroke="#e60d14" stroke-width="0.9">w</text>
<text transform="rotate(273.86) translate(0,-115) scale(0.82,1)" text-anchor="middle" dominant-baseline="central" font-family="Liberation Sans" font-weight="bold" font-size="25" fill="#e60d14" stroke="#e60d14" stroke-width="0.9">w</text>
<text transform="rotate(289.92) translate(0,-115) scale(0.82,1)" text-anchor="middle" dominant-baseline="central" font-family="Liberation Sans" font-weight="bold" font-size="25" fill="#e60d14" stroke="#e60d14" stroke-width="0.9">w</text>
<text transform="rotate(305.98) translate(0,-115) scale(0.82,1)" text-anchor="middle" dominant-baseline="central" font-family="Liberation Sans" font-weight="bold" font-size="25" fill="#e60d14" stroke="#e60d14" stroke-width="0.9">.</text>
<text transform="rotate(322.04) translate(0,-115) scale(0.82,1)" text-anchor="middle" dominant-baseline="central" font-family="Liberation Sans" font-weight="bold" font-size="25" fill="#e60d14" stroke="#e60d14" stroke-width="0.9">5</text>
<text transform="rotate(338.10) translate(0,-115) scale(0.82,1)" text-anchor="middle" dominant-baseline="central" font-family="Liberation Sans" font-weight="bold" font-size="25" fill="#e60d14" stroke="#e60d14" stroke-width="0.9">1</text>
<text transform="rotate(354.16) translate(0,-115) scale(0.82,1)" text-anchor="middle" dominant-baseline="central" font-family="Liberation Sans" font-weight="bold" font-size="25" fill="#e60d14" stroke="#e60d14" stroke-width="0.9">5</text>
<text transform="rotate(370.22) translate(0,-115) scale(0.82,1)" text-anchor="middle" dominant-baseline="central" font-family="Liberation Sans" font-weight="bold" font-size="25" fill="#e60d14" stroke="#e60d14" stroke-width="0.9">y</text>
<text transform="rotate(386.28) translate(0,-115) scale(0.82,1)" text-anchor="middle" dominant-baseline="central" font-family="Liberation Sans" font-weight="bold" font-size="25" fill="#e60d14" stroke="#e60d14" stroke-width="0.9">m</text>
<text transform="rotate(402.34) translate(0,-115) scale(0.82,1)" text-anchor="middle" dominant-baseline="central" font-family="Liberation Sans" font-weight="bold" font-size="25" fill="#e60d14" stroke="#e60d14" stroke-width="0.9">.</text>
<text transform="rotate(418.40) translate(0,-115) scale(0.82,1)" text-anchor="middle" dominant-baseline="central" font-family="Liberation Sans" font-weight="bold" font-size="25" fill="#e60d14" stroke="#e60d14" stroke-width="0.9">c</text>
<text transform="rotate(434.46) translate(0,-115) scale(0.82,1)" text-anchor="middle" dominant-baseline="central" font-family="Liberation Sans" font-weight="bold" font-size="25" fill="#e60d14" stroke="#e60d14" stroke-width="0.9">o</text>
<text transform="rotate(450.52) translate(0,-115) scale(0.82,1)" text-anchor="middle" dominant-baseline="central" font-family="Liberation Sans" font-weight="bold" font-size="25" fill="#e60d14" stroke="#e60d14" stroke-width="0.9">m</text>
<text x="-72" y="11" font-family="Liberation Sans" font-weight="bold" font-size="36" fill="#e60d14">515<tspan font-size="38" font-weight="normal" stroke="#e60d14" stroke-width="0.6">源码</tspan></text>
<text x="-73" y="79" font-family="Liberation Sans" font-weight="bold" font-size="26" letter-spacing="0.4" fill="#e60d14">515ym. com</text>
<text transform="rotate(27.60) translate(0,125)" text-anchor="middle" dominant-baseline="central" font-family="Liberation Sans" font-style="italic" font-size="13" fill="#e60d14" stroke="#e60d14" stroke-width="0.3">5</text>
<text transform="rotate(20.77) translate(0,125)" text-anchor="middle" dominant-baseline="central" font-family="Liberation Sans" font-style="italic" font-size="13" fill="#e60d14" stroke="#e60d14" stroke-width="0.3">1</text>
<text transform="rotate(13.95) translate(0,125)" text-anchor="middle" dominant-baseline="central" font-family="Liberation Sans" font-style="italic" font-size="13" fill="#e60d14" stroke="#e60d14" stroke-width="0.3">5</text>
<text transform="rotate(7.12) translate(0,125)" text-anchor="middle" dominant-baseline="central" font-family="Liberation Sans" font-style="italic" font-size="13" fill="#e60d14" stroke="#e60d14" stroke-width="0.3">y</text>
<text transform="rotate(0.30) translate(0,125)" text-anchor="middle" dominant-baseline="central" font-family="Liberation Sans" font-style="italic" font-size="13" fill="#e60d14" stroke="#e60d14" stroke-width="0.3">m</text>
<text transform="rotate(-6.53) translate(0,125)" text-anchor="middle" dominant-baseline="central" font-family="Liberation Sans" font-style="italic" font-size="13" fill="#e60d14" stroke="#e60d14" stroke-width="0.3">.</text>
<text transform="rotate(-13.35) translate(0,125)" text-anchor="middle" dominant-baseline="central" font-family="Liberation Sans" font-style="italic" font-size="13" fill="#e60d14" stroke="#e60d14" stroke-width="0.3">c</text>
<text transform="rotate(-20.17) translate(0,125)" text-anchor="middle" dominant-baseline="central" font-family="Liberation Sans" font-style="italic" font-size="13" fill="#e60d14" stroke="#e60d14" stroke-width="0.3">o</text>
<text transform="rotate(-27.00) translate(0,125)" text-anchor="middle" dominant-baseline="central" font-family="Liberation Sans" font-style="italic" font-size="13" fill="#e60d14" stroke="#e60d14" stroke-width="0.3">m</text>
</svg>
</body></html>
